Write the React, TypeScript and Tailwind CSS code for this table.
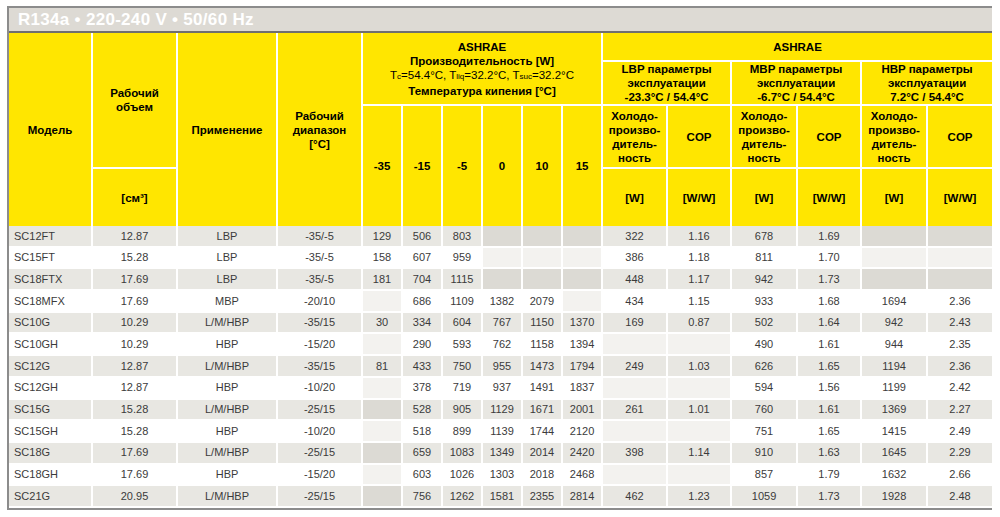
import { Fragment } from "react";

type Cell = string | number;

type Row = {
  model: string;
  volume: string;
  use: string;
  range: string;
  cap: Cell[];
  lbp: Cell[];
  mbp: Cell[];
  hbp: Cell[];
};

const rows: Row[] = [
  { model: "SC12FT", volume: "12.87", use: "LBP", range: "-35/-5", cap: [129, 506, 803, "", "", ""], lbp: [322, "1.16"], mbp: [678, "1.69"], hbp: ["", ""] },
  { model: "SC15FT", volume: "15.28", use: "LBP", range: "-35/-5", cap: [158, 607, 959, "", "", ""], lbp: [386, "1.18"], mbp: [811, "1.70"], hbp: ["", ""] },
  { model: "SC18FTX", volume: "17.69", use: "LBP", range: "-35/-5", cap: [181, 704, 1115, "", "", ""], lbp: [448, "1.17"], mbp: [942, "1.73"], hbp: ["", ""] },
  { model: "SC18MFX", volume: "17.69", use: "MBP", range: "-20/10", cap: ["", 686, 1109, 1382, 2079, ""], lbp: [434, "1.15"], mbp: [933, "1.68"], hbp: [1694, "2.36"] },
  { model: "SC10G", volume: "10.29", use: "L/M/HBP", range: "-35/15", cap: [30, 334, 604, 767, 1150, 1370], lbp: [169, "0.87"], mbp: [502, "1.64"], hbp: [942, "2.43"] },
  { model: "SC10GH", volume: "10.29", use: "HBP", range: "-15/20", cap: ["", 290, 593, 762, 1158, 1394], lbp: ["", ""], mbp: [490, "1.61"], hbp: [944, "2.35"] },
  { model: "SC12G", volume: "12.87", use: "L/M/HBP", range: "-35/15", cap: [81, 433, 750, 955, 1473, 1794], lbp: [249, "1.03"], mbp: [626, "1.65"], hbp: [1194, "2.36"] },
  { model: "SC12GH", volume: "12.87", use: "HBP", range: "-10/20", cap: ["", 378, 719, 937, 1491, 1837], lbp: ["", ""], mbp: [594, "1.56"], hbp: [1199, "2.42"] },
  { model: "SC15G", volume: "15.28", use: "L/M/HBP", range: "-25/15", cap: ["", 528, 905, 1129, 1671, 2001], lbp: [261, "1.01"], mbp: [760, "1.61"], hbp: [1369, "2.27"] },
  { model: "SC15GH", volume: "15.28", use: "HBP", range: "-10/20", cap: ["", 518, 899, 1139, 1744, 2120], lbp: ["", ""], mbp: [751, "1.65"], hbp: [1415, "2.49"] },
  { model: "SC18G", volume: "17.69", use: "L/M/HBP", range: "-25/15", cap: ["", 659, 1083, 1349, 2014, 2420], lbp: [398, "1.14"], mbp: [910, "1.63"], hbp: [1645, "2.29"] },
  { model: "SC18GH", volume: "17.69", use: "HBP", range: "-15/20", cap: ["", 603, 1026, 1303, 2018, 2468], lbp: ["", ""], mbp: [857, "1.79"], hbp: [1632, "2.66"] },
  { model: "SC21G", volume: "20.95", use: "L/M/HBP", range: "-25/15", cap: ["", 756, 1262, 1581, 2355, 2814], lbp: [462, "1.23"], mbp: [1059, "1.73"], hbp: [1928, "2.48"] },
];

const colWidths = [
  "w-[84px]", "w-[85px]", "w-[100px]", "w-[85px]",
  "w-[40px]", "w-[40px]", "w-[40px]", "w-[40px]", "w-[40px]", "w-[40px]",
  "w-[65px]", "w-[64px]", "w-[66px]", "w-[64px]", "w-[66px]", "w-[64px]",
];

// header cell: yellow, bold, centered
const th = "bg-[#ffe600] font-bold text-black text-center align-middle leading-[14px] p-0 border-white";

function DataCell({ value, odd, last, left }: { value: Cell; odd: boolean; last?: boolean; left?: boolean }) {
  const empty = value === "";
  const bg = empty ? (odd ? "bg-[#dcdad4]" : "bg-[#f3f2ef]") : odd ? "bg-[#e8e7e2]" : "bg-white";
  return (
    <td
      className={`${bg} p-0 border-white border-b-2 ${last ? "" : "border-r-2"} ${
        left ? "text-left pl-[5px]" : "text-center"
      }`}
    >
      {value}
    </td>
  );
}

export default function App() {
  return (
    <div className="w-[1000px] h-[517px] bg-white pl-[7px] pt-[6px] font-['Liberation_Sans',Arial,sans-serif]">
      <div className="w-[985px] border-l-2 border-t-2 border-b-2 border-[#8c8c8c]">
        <div className="h-[25px] bg-[#dddad4] border-b-2 border-[#6f6f6f] pl-[9px] flex items-center">
          <span className="text-white font-bold text-[17px] tracking-[0.3px] leading-none">
            R134a • 220-240 V • 50/60 Hz
          </span>
        </div>
        <table className="table-fixed border-separate border-spacing-0 w-[983px] text-[11.5px]">
          <colgroup>
            {colWidths.map((w, i) => (
              <col key={i} className={w} />
            ))}
          </colgroup>
          <thead>
            <tr className="h-[29px]">
              <th rowSpan={4} className={`${th} border-r-2`}>Модель</th>
              <th rowSpan={3} className={`${th} border-r-2 border-b-2`}>
                Рабочий
                <br />
                объем
              </th>
              <th rowSpan={4} className={`${th} border-r-2`}>Применение</th>
              <th rowSpan={4} className={`${th} border-r-2`}>
                Рабочий
                <br />
                диапазон
                <br />
                [°C]
              </th>
              <th colSpan={6} rowSpan={2} className={`${th} border-r-2 border-b-2`}>
                ASHRAE
                <br />
                Производительность [W]
                <br />
                <span className="font-normal">
                  T<span className="text-[8px]">c</span>=54.4°C, T<span className="text-[8px]">liq</span>=32.2°C, T
                  <span className="text-[8px]">suc</span>=32.2°C
                </span>
                <br />
                Температура кипения [°C]
              </th>
              <th colSpan={6} className={`${th} border-b-2`}>ASHRAE</th>
            </tr>
            <tr className="h-[44px]">
              <th colSpan={2} className={`${th} border-r-2 border-b-2`}>
                LBP параметры
                <br />
                эксплуатации
                <br />
                -23.3°C / 54.4°C
              </th>
              <th colSpan={2} className={`${th} border-r-2 border-b-2`}>
                MBP параметры
                <br />
                эксплуатации
                <br />
                -6.7°C / 54.4°C
              </th>
              <th colSpan={2} className={`${th} border-b-2`}>
                HBP параметры
                <br />
                эксплуатации
                <br />
                7.2°C / 54.4°C
              </th>
            </tr>
            <tr className="h-[63px]">
              {["-35", "-15", "-5", "0", "10", "15"].map((t) => (
                <th key={t} rowSpan={2} className={`${th} border-r-2`}>
                  {t}
                </th>
              ))}
              {[0, 1, 2].map((i) => (
                <Fragment key={i}>
                  <th className={`${th} border-r-2 border-b-2`}>
                    Холодо-
                    <br />
                    произво-
                    <br />
                    дитель-
                    <br />
                    ность
                  </th>
                  <th className={`${th} border-b-2 ${i < 2 ? "border-r-2" : ""}`}>COP</th>
                </Fragment>
              ))}
            </tr>
            <tr className="h-[57px]">
              <th className={`${th} border-r-2`}>[см³]</th>
              {[0, 1, 2].map((i) => (
                <Fragment key={i}>
                  <th className={`${th} border-r-2`}>[W]</th>
                  <th className={`${th} ${i < 2 ? "border-r-2" : ""}`}>[W/W]</th>
                </Fragment>
              ))}
            </tr>
          </thead>
          <tbody className="text-[11px] text-[#3b3b3b]">
            {rows.map((r, idx) => {
              const odd = idx % 2 === 0;
              const vals: Cell[] = [r.volume, r.use, r.range, ...r.cap, ...r.lbp, ...r.mbp, ...r.hbp];
              return (
                <tr key={r.model} className="h-[21.7px]">
                  <DataCell value={r.model} odd={odd} left />
                  {vals.map((v, i) => (
                    <DataCell key={i} value={v} odd={odd} last={i === vals.length - 1} />
                  ))}
                </tr>
              );
            })}
          </tbody>
        </table>
      </div>
    </div>
  );
}
